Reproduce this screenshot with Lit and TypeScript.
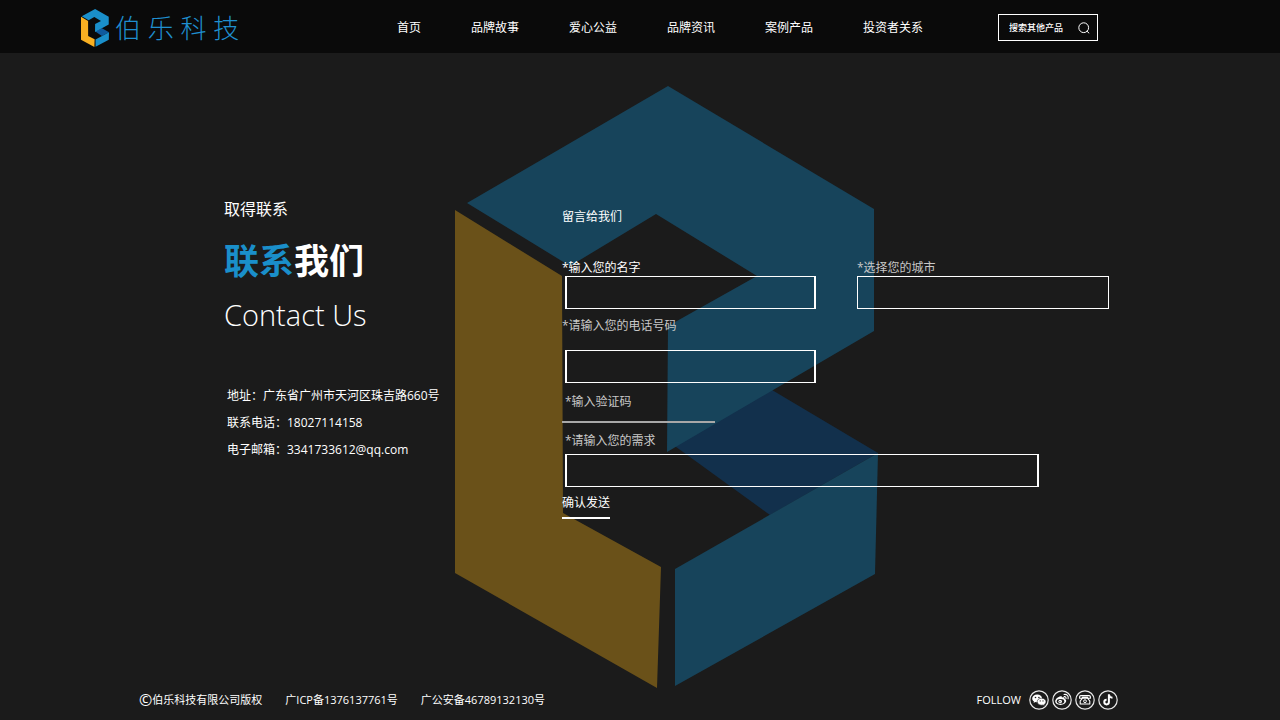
import { LitElement, html, css, svg } from "lit";
import { customElement, property } from "lit/decorators.js";

const NAV = ["首页", "品牌故事", "爱心公益", "品牌资讯", "案例产品", "投资者关系"];

const SOCIAL = [
  {
    name: "微信",
    glyph: svg`
      <path fill="#fff" d="M8.2 4.400C5.300 4.400 3.200 6.200 3.200 8.400c0 1.300.7 2.300 1.800 3.100l-.4 1.400 1.600-.9c.7.200 1.300.3 2 .3 2.900 0 5-1.700 5-3.900S11.100 4.400 8.200 4.400z"/>
      <path fill="#fff" stroke="#1b1b1b" stroke-width=".6" d="M12.600 8.200c-2.500 0-4.400 1.500-4.400 3.500s1.900 3.500 4.400 3.500c.5 0 1-.1 1.500-.2l1.600.9-.4-1.400c1-.7 1.700-1.700 1.700-2.800 0-2-1.900-3.500-4.400-3.500z"/>
      <g fill="#1b1b1b"><circle cx="6.500" cy="7.500" r=".8"/><circle cx="9.900" cy="7.500" r=".8"/><circle cx="11.200" cy="10.900" r=".6"/><circle cx="14" cy="10.900" r=".6"/></g>`,
  },
  {
    name: "微博",
    glyph: svg`
      <path fill="#fff" d="M8.500 6.300c.9-.3 1.600 0 1.400 1.300 1.600-.6 3.100-.3 2.700 1.300 1.100.3 1.800 1.100 1.600 2.200-.3 2.200-2.900 3.800-5.700 3.800-2.900 0-5.300-1.400-5.300-3.600 0-2.100 3-4.600 5.300-5z"/>
      <ellipse cx="8.500" cy="11.400" rx="3.800" ry="2.400" fill="#1b1b1b"/>
      <circle cx="8.200" cy="11.500" r="1.800" fill="#fff"/><circle cx="7.900" cy="11.700" r=".6" fill="#1b1b1b"/>
      <path fill="none" stroke="#fff" stroke-width="1.100" stroke-linecap="round" d="M12 4.500c2.900-.5 4.800 1.600 4.100 4.300M12.200 6.600c1.300-.2 2.100.8 1.800 1.900"/>`,
  },
  {
    name: "电话",
    glyph: svg`
      <path fill="none" stroke="#fff" stroke-width="1.100" stroke-linejoin="round" d="M4.600 8.300V6.700c0-.7.600-1.100 1.300-1.100h8.200c.7 0 1.300.4 1.300 1.100v1.600h-2.800V7.300H7.400v1zM7.300 8.300h5.400l2.100 2.700v3H5.200v-3z"/>
      <circle cx="10" cy="11.200" r="1.400" fill="none" stroke="#fff"/>`,
  },
  {
    name: "抖音",
    glyph: svg`
      <path fill="none" stroke="#fff" stroke-width="2" d="M10.900 4.200v7.900a2.300 2.300 0 1 1-2.300-2.300M10.900 4.500c.2 2 1.600 3.200 3.600 3.300"/>`,
  },
];

@customElement("brand-mark")
class BrandMark extends LitElement {
  static styles = css`
    :host { display: block; }
    .shape { display: block; width: 100%; height: 100%; }
    .sky { fill: var(--mark-sky, #1a8fca); }
    .navy { fill: var(--mark-navy, #0f5a9e); }
    .gold { fill: var(--mark-gold, #f9b022); }
  `;
  render() {
    return html`<svg class="shape" viewBox="455 86 423 603" preserveAspectRatio="none" aria-hidden="true">
      <polygon class="navy" points="768,390 772,390 878,453 770,515 672,444" />
      <polygon class="sky" points="668,86 874,209 874,331 667,452 668,326 757,276 656,214 570,266 467,203" />
      <polygon class="sky" points="878,453 875,574 675,686 675,569" />
      <polygon class="gold" points="455,210 562,276 563,513 661,567 657,688 455,573" />
    </svg>`;
  }
}

@customElement("social-link")
class SocialLink extends LitElement {
  @property() label = "";
  @property({ attribute: false }) glyph: unknown;
  static styles = css`
    :host { display: block; }
    .link { display: block; }
    .icon { display: block; width: 20px; height: 20px; }
  `;
  render() {
    return html`<a class="link" href="#" aria-label=${this.label}>
      <svg class="icon" viewBox="0 0 20 20">
        <circle cx="10" cy="10" r="9.200" fill="none" stroke="#e8e8e8" stroke-width="1.200" />
        ${this.glyph}
      </svg>
    </a>`;
  }
}

@customElement("app-root")
class AppRoot extends LitElement {
  static styles = css`
    :host {
      display: flex;
      flex-direction: column;
      min-height: 100vh;
      box-sizing: border-box;
      background: #1b1b1b;
      color: #fff;
      font: 12px/18px "Open Sans", "Noto Sans CJK SC", sans-serif;
    }
    * { box-sizing: border-box; }
    a { color: inherit; text-decoration: none; }
    h1, h2, p { margin: 0; font-weight: 400; }

    .top {
      display: flex;
      align-items: center;
      height: 53px;
      padding: 2px 182px 0 81px;
      background: #0a0a0a;
    }
    .brand { display: flex; align-items: center; gap: 6px; color: #1f8fd0; }
    .brand-mark { width: 28px; height: 38px; }
    .brand-name { font-size: 26px; line-height: 38px; font-weight: 300; white-space: nowrap; }
    .nav { display: flex; gap: 50px; margin: 0 75px 0 auto; white-space: nowrap; }
    .search {
      display: flex;
      align-items: center;
      width: 100px;
      height: 27px;
      padding: 0 7px 0 10px;
      border: 1px solid #fff;
    }
    .search-input {
      flex: 1;
      min-width: 0;
      padding: 0;
      border: 0;
      background: none;
      color: #fff;
      outline: 0;
      font: 500 9px/18px "Open Sans", "Noto Sans CJK SC", sans-serif;
    }
    .search-input::placeholder { color: #fff; opacity: 1; }
    .search-button { padding: 0; border: 0; background: none; }
    .search-icon { display: block; width: 12px; height: 12px; }

    .main { flex: 1; display: grid; }
    .backdrop {
      grid-area: 1 / 1;
      width: 423px;
      height: 603px;
      margin: 33px 0 0 455px;
      --mark-sky: #17445b;
      --mark-navy: #12304c;
      --mark-gold: #6a5119;
    }
    .content {
      grid-area: 1 / 1;
      z-index: 1;
      display: grid;
      grid-template-columns: 338px minmax(0, 1fr);
      align-items: start;
      padding: 0 171px 0 224px;
    }
    .intro { padding-top: 144px; }
    .eyebrow { font-size: 16px; line-height: 24px; }
    .title { margin-top: 16px; font-size: 35px; line-height: 48px; font-weight: 700; }
    .accent { color: #1a8fca; }
    .subtitle { margin-top: 8px; font-size: 29px; line-height: 44px; font-weight: 300; }
    .details { margin-top: 45px; padding-left: 3px; line-height: 27px; font-style: normal; }

    .form { display: flex; flex-direction: column; padding-top: 155px; }
    .form-title { font-size: 12px; line-height: 18px; }
    .fields {
      display: grid;
      grid-template-columns: 254fr 252fr;
      gap: 9px 41px;
      margin-top: 34px;
    }
    .field { display: flex; flex-direction: column; }
    .label { line-height: 16px; color: #c8c8c8; }
    .label.strong { color: #fff; }
    .label.inset { padding-left: 3px; }
    .box {
      width: auto;
      height: 33px;
      margin: 0 0 0 3px;
      padding: 0 8px;
      border: solid #fff;
      border-width: 1px 2px;
      border-radius: 0;
      background: none;
      color: #fff;
      font: inherit;
      appearance: none;
      outline: 0;
    }
    .box.flush { margin-left: 0; border-width: 1px; }
    .phone { gap: 16px; }
    .code { width: 153px; margin-top: 11px; }
    .line {
      height: 13px;
      padding: 0;
      border: 0;
      border-bottom: 2px solid #a8a8a8;
      background: none;
      color: #fff;
      font: 12px/11px "Open Sans", "Noto Sans CJK SC", sans-serif;
      outline: 0;
    }
    .need { gap: 5px; margin: 10px 70px 0 0; }
    .send {
      align-self: flex-start;
      margin-top: 7px;
      padding: 0 0 5px;
      border: 0;
      border-bottom: 2px solid #fff;
      background: none;
      color: #fff;
      font: inherit;
    }

    .bottom {
      display: flex;
      align-items: center;
      gap: 23px;
      padding: 0 162px 10px 139px;
      font-size: 11px;
      line-height: 20px;
      white-space: nowrap;
    }
    .rights { display: flex; }
    .copy { font-size: 16px; }
    .follow { display: flex; align-items: center; gap: 3px; margin-left: auto; }
    .follow-text { margin-right: 5px; }
  `;

  render() {
    return html`
      <header class="top">
        <a class="brand" href="#">
          <brand-mark class="brand-mark"></brand-mark>
          <span class="brand-name">伯 乐 科 技</span>
        </a>
        <nav class="nav">${NAV.map((item) => html`<a href="#">${item}</a>`)}</nav>
        <form class="search" role="search">
          <input class="search-input" type="search" aria-label="搜索其他产品" placeholder="搜索其他产品" />
          <button class="search-button" type="button" aria-label="搜索">
            <svg class="search-icon" viewBox="0 0 12 12" fill="none" stroke="#fff">
              <circle cx="5.700" cy="5.700" r="4.900" />
              <path d="M8.800 9l2.400 2.300" />
            </svg>
          </button>
        </form>
      </header>

      <main class="main">
        <brand-mark class="backdrop"></brand-mark>
        <div class="content">
          <section class="intro">
            <p class="eyebrow">取得联系</p>
            <h1 class="title"><span class="accent">联系</span>我们</h1>
            <p class="subtitle">Contact Us</p>
            <address class="details">
              <p>地址：广东省广州市天河区珠吉路660号</p>
              <p>联系电话：18027114158</p>
              <p>电子邮箱：3341733612@qq.com</p>
            </address>
          </section>

          <form class="form">
            <h2 class="form-title">留言给我们</h2>
            <div class="fields">
              <div class="field">
                <label class="label strong" for="name">*输入您的名字</label>
                <input class="box" id="name" type="text" />
              </div>
              <div class="field">
                <label class="label" for="city">*选择您的城市</label>
                <select class="box flush" id="city"><option value=""></option></select>
              </div>
              <div class="field phone">
                <label class="label" for="phone">*请输入您的电话号码</label>
                <input class="box" id="phone" type="tel" />
              </div>
            </div>
            <div class="field code">
              <label class="label inset" for="code">*输入验证码</label>
              <input class="line" id="code" type="text" />
            </div>
            <div class="field need">
              <label class="label inset" for="need">*请输入您的需求</label>
              <input class="box" id="need" type="text" />
            </div>
            <button class="send" type="button">确认发送</button>
          </form>
        </div>
      </main>

      <footer class="bottom">
        <span class="rights"><span class="copy">©</span>伯乐科技有限公司版权</span>
        <span>广ICP备1376137761号</span>
        <span>广公安备46789132130号</span>
        <div class="follow">
          <span class="follow-text">FOLLOW</span>
          ${SOCIAL.map((s) => html`<social-link .label=${s.name} .glyph=${s.glyph}></social-link>`)}
        </div>
      </footer>
    `;
  }
}
